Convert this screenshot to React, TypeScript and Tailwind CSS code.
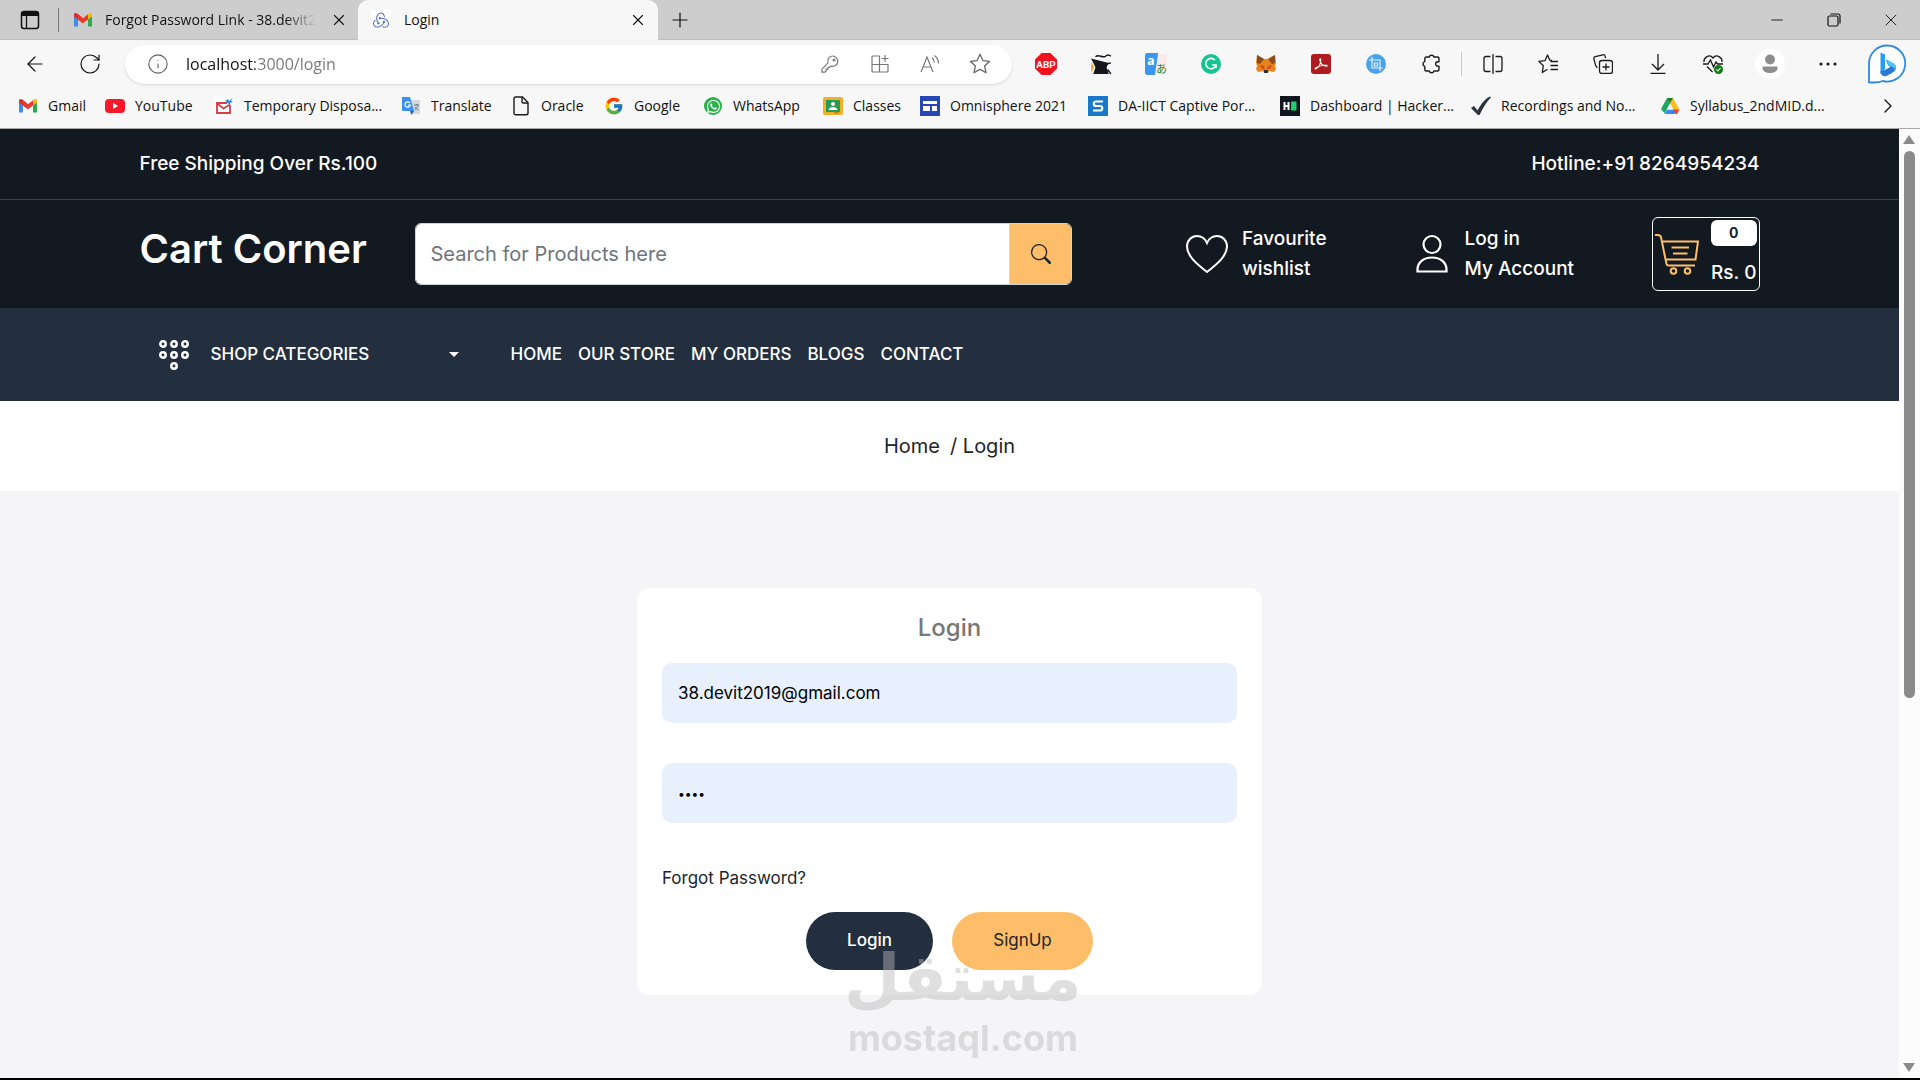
import React, { useState } from "react";
import { ArrowLeft, ChevronRight, Info, Minus, Plus, RotateCw, X } from "lucide-react";
import { BsSearch } from "react-icons/bs";
import { FaWhatsapp } from "react-icons/fa";
import { FcGoogle } from "react-icons/fc";
import { SiRedux } from "react-icons/si";

type IconProps = { className?: string };

const GmailIcon = ({ className = "h-5 w-5" }: IconProps) => (
  <svg viewBox="0 0 20 20" className={className}>
    <path d="M1 5v11.5h4V9z" fill="#3b8eea" />
    <path d="M19 5v11.5h-4V9z" fill="#2fa84f" />
    <path d="M1 4.5c0-1.500 2-2 3.200-1L10 8.200v5L1 6.500z" fill="#d93025" />
    <path d="M5 4.200l5 4 5-4v5.200l-5 3.800-5-3.800z" fill="#ea3a2e" />
    <path d="M15 4.200l.8-.6c1.200-1 3.200-.6 3.200.9v2l-4 2.900z" fill="#f5b912" />
  </svg>
);

const YoutubeIcon = () => (
  <svg viewBox="0 0 20 20" className="h-5 w-5">
    <rect x="0" y="3" width="20" height="14" rx="4" fill="#f6192a" />
    <path d="M8 7v6l5.200-3z" fill="#fff" />
  </svg>
);

const TempMailIcon = () => (
  <svg viewBox="0 0 20 20" className="h-5 w-5">
    <rect width="20" height="20" fill="#fff" />
    <path d="M13 7H3v10h13V9" fill="none" stroke="#dc3b42" strokeWidth="1.8" />
    <path d="M3 7.500l6.500 5 6.500-4" fill="none" stroke="#dc3b42" strokeWidth="1.800" />
    <path d="M11 5l3-2 1 2 4-3-2 3 2 1-3 1v3l-2-3-3 1 2-2z" fill="#2b8be0" />
  </svg>
);

const TranslateIcon = () => (
  <svg viewBox="0 0 20 20" className="h-5 w-5">
    <path d="M9 4h9c.6 0 1 .4 1 1v12c0 .6-.4 1-1 1h-6z" fill="#d5d8dc" />
    <path d="M2 1h7l4 14H2c-.6 0-1-.4-1-1V2c0-.6.400-1 1-1z" fill="#3c91ee" />
    <path d="M9 15h4l-2.500 4z" fill="#2059c4" />
    <path d="M9 7a2.700 2.700 0 1 0 .4 2H7" fill="none" stroke="#fff" strokeWidth="1.200" />
    <path d="M13 9h5M15.500 8v1M17 9c-.4 2.500-2 4-3.500 5M14 11c.8 1.500 2 2.500 3.500 3" fill="none" stroke="#6b7785" strokeWidth="1" />
  </svg>
);

const FileIcon = () => (
  <svg viewBox="0 0 20 20" className="h-5 w-5" fill="none" stroke="#1b1b1b" strokeWidth="1.400">
    <path d="M4.500 1h7L17 6.500V17c0 1-.7 1.800-1.800 1.800H4.800C3.700 18.800 3 18 3 17V2.600C3 1.600 3.700 1 4.500 1z" />
    <path d="M11 1v4.500c0 .8.500 1.500 1.300 1.500H17" />
  </svg>
);

const ClassroomIcon = () => (
  <svg viewBox="0 0 20 20" className="h-5 w-5">
    <rect y="1" width="20" height="18" rx="2" fill="#f0b02a" />
    <rect x="3" y="4" width="14" height="12" fill="#2a9b57" />
    <circle cx="10" cy="8" r="2" fill="#fff" />
    <path d="M5.500 14c.5-4 8.500-4 9 0z" fill="#fff" />
    <rect x="11" y="16" width="5" height="1.500" fill="#b98610" />
  </svg>
);

const SitesIcon = () => (
  <svg viewBox="0 0 20 20" className="h-5 w-5">
    <rect width="20" height="20" fill="#2747b5" />
    <rect x="3" y="5" width="14" height="3" fill="#fff" />
    <rect x="3" y="10" width="7" height="5" fill="#fff" />
    <rect x="12" y="10" width="5" height="5" fill="#fff" />
  </svg>
);

const CaptiveIcon = () => (
  <svg viewBox="0 0 20 20" className="h-5 w-5">
    <rect width="20" height="20" fill="#1a78c8" />
    <path d="M15 5.500H8c-3 0-3 4.500 0 4.500h4c3 0 3 4.500 0 4.500H5" fill="none" stroke="#fff" strokeWidth="2.200" />
  </svg>
);

const HackerRankIcon = () => (
  <svg viewBox="0 0 20 20" className="h-5 w-5">
    <rect width="20" height="20" fill="#0f161f" />
    <path d="M4.500 6v8M8.500 6v8M4.500 10h4" stroke="#fff" strokeWidth="2" />
    <rect x="11" y="5.500" width="5.500" height="9" rx="1" fill="#1fcf6c" />
  </svg>
);

const TickIcon = () => (
  <svg viewBox="0 0 20 20" className="h-5 w-5">
    <path d="M0 12l3-2 3.500 4.500C10 8 14 3 19 .5l1 .8C15 6.500 12 12 8.500 19H7z" fill="#2b323b" />
  </svg>
);

const DriveIcon = () => (
  <svg viewBox="0 0 20 20" className="h-5 w-5">
    <path d="M7 2h6l-3 5.500-5.500 9.700L1 13z" fill="#1fa463" />
    <path d="M13 2l6.500 11.500h-6L7 2z" fill="#fbbc1c" />
    <path d="M7 2h6l-3 5.300z" fill="#188038" />
    <path d="M4.500 18L7 13.500h9.500L15 18z" fill="#3b86f0" />
    <path d="M13.500 13.500h6L17 18h-1.500z" fill="#ea4335" />
    <path d="M10 8.300l-3 5.200h6z" fill="#f7f7f7" />
  </svg>
);

const KeyIcon = () => (
  <svg viewBox="0 0 20 20" className="h-5 w-5" fill="none" stroke="#75777a" strokeWidth="1.200">
    <path d="M12.500 2a5.200 5.200 0 1 1-1.700 10.100l-1.300 1.300H8v1.800H6.200V17L5 18.200H2v-3l6-6.300A5.200 5.200 0 0 1 12.500 2z" />
    <circle cx="14" cy="6" r="1" />
  </svg>
);

const AppsIcon = () => (
  <svg viewBox="0 0 20 20" className="h-5 w-5" fill="none" stroke="#75777a" strokeWidth="1.200">
    <path d="M9.500 2H3c-.6 0-1 .4-1 1v14c0 .6.400 1 1 1h14c.6 0 1-.4 1-1v-6.500H2M9.500 2v16M15 1v7M11.500 4.500h7" />
  </svg>
);

const ReadAloudIcon = () => (
  <svg viewBox="0 0 20 20" className="h-5 w-5" fill="none" stroke="#75777a" strokeWidth="1.200">
    <path d="M1 18L7 3l6 15M3.200 13h7.600M12 3.500c1.500 1.200 2.300 3 2.300 5M14.500 1.500c2.500 1.800 4 4.500 4 8" />
  </svg>
);

const StarIcon = () => (
  <svg viewBox="0 0 20 20" className="h-[22px] w-[22px]" fill="none" stroke="#65676a" strokeWidth="1.200" strokeLinejoin="round">
    <path d="M10 1.200l2.600 5.700 6.200.7-4.600 4.200 1.300 6.200-5.500-3.100-5.500 3.100 1.300-6.200L1.200 7.600l6.200-.7z" />
  </svg>
);

const AbpIcon = () => (
  <svg viewBox="0 0 20 20" className="h-[22px] w-[22px]">
    <path d="M6 0h8l6 6v8l-6 6H6l-6-6V6z" fill="#f2131f" />
    <text x="10" y="13.300" textAnchor="middle" fontSize="9" fontWeight="700" fontFamily="Roboto, sans-serif" fill="#fff">
      ABP
    </text>
  </svg>
);

const ClapperIcon = () => (
  <svg viewBox="0 0 20 20" className="h-[22px] w-[22px]">
    <path d="M1 8l3 5-3 5z" fill="#f4b136" />
    <path d="M1 5l16 4-2 4 2 6H3l2-6z" fill="#15171a" />
    <path d="M5 3.500c3-3 6 1.500 9-.5 2-2 4-1 5 0M15 10l4-1M16 15l3 4" fill="none" stroke="#15171a" strokeWidth="1.300" />
  </svg>
);

const DictionaryIcon = () => (
  <svg viewBox="0 0 20 20" className="h-[22px] w-[22px]">
    <rect x="8" y="1" width="12" height="18" fill="#fbeae8" />
    <path d="M2 0h10L9 20H2c-1 0-2-.8-2-2V2C0 .8 1 0 2 0z" fill="#3a97ee" />
    <text x="2" y="11" fontSize="11" fontWeight="700" fontFamily="Open Sans, sans-serif" fill="#fff">
      a
    </text>
    <text x="10" y="18" fontSize="10" fontFamily="Noto Sans CJK JP, sans-serif" fill="#1f8a3b">
      あ
    </text>
  </svg>
);

const GrammarIcon = () => (
  <svg viewBox="0 0 20 20" className="h-5 w-5">
    <circle cx="10" cy="10" r="10" fill="#15c491" />
    <path d="M14 6.200A5.200 5.200 0 1 0 15 11h-4M15 11v3" fill="none" stroke="#fff" strokeWidth="1.600" />
  </svg>
);

const FoxIcon = () => (
  <svg viewBox="0 0 20 20" className="h-5 w-5">
    <path d="M1 1l7 4h4l7-4 1 7-1 4 1 3-2 3-5-1-1 2H8l-1-2-5 1-2-3 1-3-1-4z" fill="#e8831d" />
    <path d="M1 1l7 4-4 5-3-1zM19 1l-7 4 4 5 3-1z" fill="#8a4b1d" />
    <path d="M4 11l4 1 1 3H6zM16 11l-4 1-1 3h3z" fill="#c94f25" />
    <path d="M8 16h4v3H8z" fill="#2a2f38" />
  </svg>
);

const AcrobatIcon = () => (
  <svg viewBox="0 0 20 20" className="h-5 w-5">
    <rect width="20" height="20" rx="3" fill="#b11a1e" />
    <path d="M4.500 15c3-1 5-4.500 5.300-9.500 0-1.300-1.300-.8-1 .4.7 3.700 3.200 6.300 6.700 6.300 1.200-.2.500-1.400-1.200-1.200-3.300.2-6.500 1-9.300 2.800-1 .7-1.200 1.500-.5 1.200z" fill="none" stroke="#fff" strokeWidth="1.100" />
  </svg>
);

const CropIcon = () => (
  <svg viewBox="0 0 20 20" className="h-5 w-5">
    <circle cx="10" cy="10" r="10" fill="#4aa3ea" />
    <path d="M6 3v11h11M3 6h11v11M8.500 9h3v3h-3z" fill="none" stroke="#e6f3fd" strokeWidth="1.200" />
  </svg>
);

// top, left and bottom knobs, with a notch on the right side
const PuzzleIcon = () => (
  <svg viewBox="0 0 20 20" className="h-5 w-5" fill="none" stroke="#1b1b1b" strokeWidth="1.400" strokeLinejoin="round">
    <path d="M8.200 3a2.500 2.500 0 0 1 4.800 0h3.500c.8 0 1.500.7 1.500 1.500v3.300h-1.200a2.200 2.200 0 0 0 0 4.400H18v3.300c0 .8-.7 1.500-1.500 1.500H13a2.500 2.500 0 0 1-4.800 0H5.300c-.8 0-1.500-.7-1.500-1.500v-3.100a2.500 2.500 0 0 1 0-4.800V4.500c0-.8.700-1.500 1.500-1.500z" />
  </svg>
);

const SplitIcon = () => (
  <svg viewBox="0 0 20 20" className="h-5 w-5" fill="none" stroke="#1b1b1b" strokeWidth="1.300">
    <path d="M7.500 2.500H3c-1.200 0-2 .8-2 2v11c0 1.200.8 2 2 2h4.500M12.500 2.500H17c1.200 0 2 .8 2 2v11c0 1.200-.8 2-2 2h-4.500M10 0v20" />
  </svg>
);

const FavoritesIcon = () => (
  <svg viewBox="0 0 20 20" className="h-5 w-5" fill="none" stroke="#1b1b1b" strokeWidth="1.300" strokeLinejoin="round">
    <path d="M14 6.500l-2.200-.3L9.500 1 7 6.700.8 7.400l4.500 4.300-1 6.800 5.200-3.200M12.500 7.500H20M12.500 11.500H20M12.500 15.500H20" />
  </svg>
);

const CollectionsIcon = () => (
  <svg viewBox="0 0 20 20" className="h-5 w-5" fill="none" stroke="#1b1b1b" strokeWidth="1.300">
    <path d="M4.500 13.500c-1-.2-1.600-.8-1.800-1.800L.9 5c-.3-1.200.3-2 1.400-2.300L9.800.8c1.200-.3 2 .3 2.300 1.400l.5 2" />
    <rect x="6.500" y="6.500" width="13" height="13" rx="2.500" />
    <path d="M13 9.500v7M9.500 13h7" />
  </svg>
);

const DownloadIcon = () => (
  <svg viewBox="0 0 20 20" className="h-5 w-5" fill="none" stroke="#1b1b1b" strokeWidth="1.300">
    <path d="M10 0v15.500M4 10l6 6 6-6M2.500 19.300h15" />
  </svg>
);

const HealthIcon = () => (
  <svg viewBox="0 0 20 20" className="h-5 w-5" fill="none" stroke="#1b1b1b" strokeWidth="1.300">
    <path d="M1 8C.5 3.500 6.500-.5 10 4c3.500-4.500 9.500-.5 9 4M0 10h5l2.500-4 3 7 2.500-5 1.500 2H20M4 12.500l5.500 5.500" />
    <circle cx="15.500" cy="15.500" r="4.500" fill="#107c10" stroke="none" />
    <path d="M13.500 15.500l1.500 1.500 2.500-3" stroke="#fff" strokeWidth="1.100" />
  </svg>
);

const ProfileIcon = () => (
  <svg viewBox="0 0 30 30" className="h-[30px] w-[30px]">
    <circle cx="15" cy="15" r="15" fill="#fff" />
    <circle cx="15" cy="10.500" r="5" fill="#8e8e8e" />
    <path d="M7.500 17.500h15v1.500c0 3-3.500 5-7.500 5s-7.500-2-7.500-5z" fill="#8e8e8e" />
  </svg>
);

const DotsIcon = () => (
  <svg viewBox="0 0 20 20" className="h-5 w-5" fill="#1b1b1b">
    <circle cx="3" cy="10" r="1.600" />
    <circle cx="10" cy="10" r="1.600" />
    <circle cx="17" cy="10" r="1.600" />
  </svg>
);

const BingIcon = () => (
  <svg viewBox="0 0 40 40" className="h-10 w-10">
    <path d="M20 1.500a18 18 0 1 1-4 35.500c-4 1.500-8 1.800-14 1.300V19.500a18 18 0 0 1 18-18z" fill="#fff" stroke="#2f8ade" strokeWidth="1.800" />
    <path d="M13.500 8.500l4.500 2v14.500l-4.500 5z" fill="#2b9df0" />
    <path d="M13.500 27v1.500c.5 3.500 4.500 4.500 7 3l6-3.500c3-2 3.300-6 .5-8.200l-8-4 2 5.500 2.500 1.500-5.500 3.200z" fill="#2a79d8" />
    <path d="M19.500 15.300l2 5.500 3.500 1.800c2 1.200 3 2.500 3.300 3.400 1-3-.2-5.700-2.300-6.900z" fill="#4cc8f2" />
  </svg>
);

const HeartIcon = () => (
  <svg viewBox="0 0 44 40" className="h-10 w-11 shrink-0" fill="none" stroke="#fff" strokeWidth="2">
    <path d="M22 38C12 30 2 22 2 12.500 2 6.500 6.500 2 12 2c4.500 0 8 2.500 10 7 2-4.500 5.500-7 10-7 5.500 0 10 4.500 10 10.500C42 22 32 30 22 38z" />
  </svg>
);

const UserIcon = () => (
  <svg viewBox="0 0 34 40" className="h-10 w-[34px] shrink-0" fill="none" stroke="#fff" strokeWidth="2.200">
    <circle cx="17" cy="10.500" r="8.500" />
    <path d="M2.500 37.500v-2c0-7 6-12 14.500-12s14.500 5 14.500 12v2z" />
  </svg>
);

const CartIcon = () => (
  <svg viewBox="0 0 44 42" className="h-[42px] w-11" fill="none" stroke="#febd69" strokeWidth="2">
    <path d="M0 2h3c1.500 0 2.500.8 3 2.200L11.500 31c.3 1 1 1.500 2 1.500H40M7.500 8.500H43l-2.500 18H10.500M16.500 14.500H34M18 20.500h14.500" />
    <circle cx="18.500" cy="38" r="2.800" />
    <circle cx="32.500" cy="38" r="2.800" />
  </svg>
);

const MenuDotsIcon = () => (
  <svg viewBox="0 0 30 30" className="h-[30px] w-[30px]" fill="none" stroke="#fff" strokeWidth="2.500">
    <circle cx="4" cy="4" r="2.700" />
    <circle cx="15" cy="4" r="2.700" />
    <circle cx="26" cy="4" r="2.700" />
    <circle cx="4" cy="15" r="2.700" />
    <circle cx="15" cy="15" r="2.700" />
    <circle cx="26" cy="15" r="2.700" />
    <circle cx="15" cy="26" r="2.700" />
  </svg>
);

const bookmarks = [
  { label: "Gmail", icon: <GmailIcon />, width: "w-[87px]" },
  { label: "YouTube", icon: <YoutubeIcon />, width: "w-[109px]" },
  { label: "Temporary Disposa...", icon: <TempMailIcon />, width: "w-[187px]" },
  { label: "Translate", icon: <TranslateIcon />, width: "w-[110px]" },
  { label: "Oracle", icon: <FileIcon />, width: "w-[93px]" },
  { label: "Google", icon: <FcGoogle size={20} />, width: "w-[99px]" },
  {
    label: "WhatsApp",
    icon: (
      <span className="flex h-5 w-5 items-center justify-center">
        <span className="flex h-[18px] w-[18px] items-center justify-center rounded-full bg-[#2bb14c] text-white">
          <FaWhatsapp size={15} />
        </span>
      </span>
    ),
    width: "w-[120px]",
  },
  { label: "Classes", icon: <ClassroomIcon />, width: "w-[97px]" },
  { label: "Omnisphere 2021", icon: <SitesIcon />, width: "w-[168px]" },
  { label: "DA-IICT Captive Por...", icon: <CaptiveIcon />, width: "w-[192px]" },
  { label: "Dashboard | Hacker...", icon: <HackerRankIcon />, width: "w-[191px]" },
  { label: "Recordings and No...", icon: <TickIcon />, width: "w-[189px]" },
  { label: "Syllabus_2ndMID.d...", icon: <DriveIcon />, width: "w-[189px]" },
];

const extensions = [
  { label: "Adblock Plus", icon: <AbpIcon /> },
  { label: "Clapper", icon: <ClapperIcon /> },
  { label: "Dictionary", icon: <DictionaryIcon /> },
  { label: "Grammar", icon: <GrammarIcon /> },
  { label: "Wallet", icon: <FoxIcon /> },
  { label: "Acrobat", icon: <AcrobatIcon /> },
  { label: "Capture", icon: <CropIcon /> },
  { label: "Extensions", icon: <PuzzleIcon /> },
];

const browserTools = [
  { label: "Split screen", icon: <SplitIcon /> },
  { label: "Favorites", icon: <FavoritesIcon /> },
  { label: "Collections", icon: <CollectionsIcon /> },
  { label: "Downloads", icon: <DownloadIcon /> },
  { label: "Browser essentials", icon: <HealthIcon /> },
];

const addressTools = [
  { label: "Passwords", icon: <KeyIcon /> },
  { label: "Apps", icon: <AppsIcon /> },
  { label: "Read aloud", icon: <ReadAloudIcon /> },
  { label: "Add to favorites", icon: <StarIcon /> },
];

const navLinks = ["Home", "Our Store", "My Orders", "Blogs", "Contact"];

function TabStrip() {
  return (
    <div className="flex h-10 items-stretch border-b border-[#bdbdbd] bg-[#cdcdcd]">
      <div className="flex w-[358px] items-center pl-5">
        <button aria-label="Tab actions">
          <svg viewBox="0 0 20 20" className="h-5 w-5">
            <rect x="1.500" y="1.500" width="17" height="17" rx="2.500" fill="none" stroke="#111" strokeWidth="1.500" />
            <path d="M1.500 6V4c0-1.500 1-2.500 2.500-2.500h12c1.500 0 2.500 1 2.500 2.500v2z" fill="#111" />
            <path d="M6.500 6v12" stroke="#111" strokeWidth="1.300" />
          </svg>
        </button>
        <div className="ml-[18px] h-6 w-px bg-[#777]" />
        <GmailIcon className="ml-[14px] h-5 w-5 shrink-0" />
        <span className="ml-3 bg-[linear-gradient(to_right,#111_85%,#cdcdcd)] bg-clip-text whitespace-nowrap text-transparent">
          Forgot Password Link - 38.devit2
        </span>
        <button aria-label="Close tab" className="mr-[10px] ml-auto">
          <X size={18} strokeWidth={1.500} />
        </button>
      </div>
      <div className="-mb-px flex w-[300px] items-center rounded-t-[10px] bg-[#f7f7f7] px-[13px] pb-px">
        <span className="flex h-5 w-5 items-center justify-center bg-white text-[#4f6ab5]">
          <SiRedux size={16} />
        </span>
        <span className="ml-[13px]">Login</span>
        <button aria-label="Close tab" className="-mr-[2px] ml-auto">
          <X size={18} strokeWidth={1.500} />
        </button>
      </div>
      <button aria-label="New tab" className="ml-[10px]">
        <Plus size={24} strokeWidth={1.200} />
      </button>
      <div className="ml-auto flex">
        <button aria-label="Minimize" className="flex w-[57px] items-center justify-center">
          <Minus size={18} strokeWidth={1.200} />
        </button>
        <button aria-label="Restore" className="flex w-[57px] items-center justify-center">
          <svg viewBox="0 0 14 14" className="h-[14px] w-[14px]" fill="none" stroke="#111" strokeWidth="1.200">
            <rect x="1" y="3" width="10" height="10" rx="1.500" />
            <path d="M3.500 1H11c1.200 0 2 .8 2 2v7.500" />
          </svg>
        </button>
        <button aria-label="Close window" className="flex w-[58px] items-center justify-center">
          <X size={20} strokeWidth={1.100} />
        </button>
      </div>
    </div>
  );
}

function Toolbar() {
  return (
    <div className="flex h-12 items-center pr-[13px] pl-[23px]">
      <button aria-label="Back">
        <ArrowLeft size={24} strokeWidth={1.200} />
      </button>
      <button aria-label="Reload" className="ml-[31px]">
        <RotateCw size={24} strokeWidth={1.200} />
      </button>
      <div className="mr-[6px] ml-[23px] flex h-[39px] flex-1 items-center rounded-full bg-white pr-[7px] pl-[22px] shadow-sm">
        <Info size={22} strokeWidth={1.200} className="text-[#5f6164]" />
        <input
          aria-label="Address"
          defaultValue="localhost:3000/login"
          className="ml-[17px] flex-1 bg-[linear-gradient(to_right,#111_69px,#767676_69px)] bg-clip-text text-base text-transparent outline-none"
        />
        {addressTools.map((tool) => (
          <button key={tool.label} aria-label={tool.label} className="flex w-[50px] justify-center">
            {tool.icon}
          </button>
        ))}
      </div>
      {extensions.map((ext) => (
        <button key={ext.label} aria-label={ext.label} className="flex w-[55px] justify-center">
          {ext.icon}
        </button>
      ))}
      <div className="mx-[3px] h-6 w-px bg-[#c8c8c8]" />
      {browserTools.map((tool) => (
        <button key={tool.label} aria-label={tool.label} className="flex w-[55px] justify-center">
          {tool.icon}
        </button>
      ))}
      <button aria-label="Profile" className="flex w-[60px] justify-center">
        <ProfileIcon />
      </button>
      <button aria-label="Settings" className="flex w-[55px] justify-center">
        <DotsIcon />
      </button>
      <button aria-label="Bing" className="ml-3">
        <BingIcon />
      </button>
    </div>
  );
}

function BookmarksBar() {
  return (
    <div className="flex h-[41px] items-center border-b border-[#a9a9a9] pb-1 pl-[18px] whitespace-nowrap">
      {bookmarks.map((item) => (
        <a key={item.label} href="#" className={`flex shrink-0 items-center gap-[10px] ${item.width}`}>
          {item.icon}
          <span>{item.label}</span>
        </a>
      ))}
      <button aria-label="More bookmarks" className="mr-5 ml-auto">
        <ChevronRight size={24} strokeWidth={1.300} />
      </button>
    </div>
  );
}

function StoreHeader() {
  return (
    <header className="text-white">
      <div className="border-b border-[#3b4149] bg-[#131921]">
        <div className="mx-auto flex h-[70px] max-w-[1650px] items-center justify-between px-[15px] text-[19px] font-medium">
          <p>Free Shipping Over Rs.100</p>
          <p>
            Hotline:<a href="tel:+918264954234">+91 8264954234</a>
          </p>
        </div>
      </div>

      <div className="bg-[#131921]">
        <div className="mx-auto grid max-w-[1650px] grid-cols-12 items-center gap-x-[30px] px-[15px] py-[17px]">
          <h2 className="col-span-2 mb-[10px] text-[40px] leading-[48px] font-semibold whitespace-nowrap">
            <a href="#">Cart Corner</a>
          </h2>
          <form className="col-span-5 flex h-[62px] overflow-hidden rounded-md border border-[#ced4da]" onSubmit={(e) => e.preventDefault()}>
            <input
              aria-label="Search for Products here"
              placeholder="Search for Products here"
              className="flex-1 bg-white px-[15px] text-xl text-black outline-none placeholder:text-[#6c757d]"
            />
            <button aria-label="Search" className="flex w-[62px] items-center justify-center border-l border-[#ced4da] bg-[#febd69] text-[#212529]">
              <BsSearch size={20} />
            </button>
          </form>
          <div className="col-span-5 flex items-center pl-[83px] text-[19px] leading-[30px] font-medium">
            <a href="#" className="flex items-center gap-[13px]">
              <HeartIcon />
              <span>
                Favourite <br /> wishlist
              </span>
            </a>
            <a href="#" className="mr-auto ml-[88px] flex items-center gap-4">
              <UserIcon />
              <span>
                Log in <br /> My Account
              </span>
            </a>
            <a href="#" className="flex h-[74px] items-center gap-3 rounded-md border border-white px-[2px]">
              <CartIcon />
              <span className="flex flex-col gap-3">
                <span className="rounded-md bg-white text-center text-sm leading-[26px] font-bold text-[#212529]">0</span>
                <span>Rs. 0</span>
              </span>
            </a>
          </div>
        </div>
      </div>

      <div className="bg-[#232f3e]">
        <div className="mx-auto flex h-[93px] max-w-[1650px] items-center px-[15px] text-[17px] font-medium uppercase">
          <button className="ml-[19px] flex w-[300px] items-center uppercase">
            <MenuDotsIcon />
            <span className="ml-[22px]">Shop Categories</span>
            <span className="ml-auto border-x-[5px] border-t-[5px] border-x-transparent border-t-white" />
          </button>
          <nav className="ml-[52px] flex gap-4">
            {navLinks.map((link) => (
              <a key={link} href="#">
                {link}
              </a>
            ))}
          </nav>
        </div>
      </div>
    </header>
  );
}

function LoginForm() {
  const [email, setEmail] = useState("38.devit2019@gmail.com");
  const [password, setPassword] = useState("1234");

  return (
    <form className="mx-auto w-full max-w-[625px] rounded-[13px] bg-white p-[25px] text-[17px]" onSubmit={(e) => e.preventDefault()}>
      <h3 className="mb-5 text-center text-2xl leading-[30px] font-medium text-[#777]">Login</h3>
      <input
        type="email"
        aria-label="Email"
        value={email}
        onChange={(e) => setEmail(e.target.value)}
        className="block h-[60px] w-full rounded-[10px] bg-[#e8f0fe] px-4 text-[17px] text-black outline-none"
      />
      <input
        type="password"
        aria-label="Password"
        value={password}
        onChange={(e) => setPassword(e.target.value)}
        className="mt-10 block h-[60px] w-full rounded-[10px] bg-[#e8f0fe] px-4 text-xs text-black outline-none"
      />
      <a href="#" className="mt-[41px] block leading-7">
        Forgot Password?
      </a>
      <div className="mt-5 flex justify-center gap-[19px]">
        <button className="h-[58px] w-[127px] rounded-full bg-[#232f3e] font-medium text-white">Login</button>
        <button type="button" className="h-[58px] w-[141px] rounded-full bg-[#febd69]">
          SignUp
        </button>
      </div>
    </form>
  );
}

function Scrollbar() {
  return (
    <div className="flex w-[21px] flex-col items-center justify-between bg-[#fcfcfc] py-[6px] pr-px">
      <span className="border-x-[6px] border-b-[9px] border-x-transparent border-b-[#8b8b8b]" />
      <div className="mt-[7px] w-[11px] flex-[60] rounded-full bg-[#8b8b8b]" />
      <div className="flex-[40]" />
      <span className="border-x-[6px] border-t-[9px] border-x-transparent border-t-[#8b8b8b]" />
    </div>
  );
}

export default function App() {
  return (
    <div className="flex min-h-screen flex-col border-b-2 border-black bg-[#f5f5f7] font-['Inter',sans-serif] text-[#212529]">
      <div className="bg-[#f7f7f7] font-['Open_Sans',sans-serif] text-sm text-[#111]">
        <TabStrip />
        <Toolbar />
        <BookmarksBar />
      </div>

      <div className="flex flex-1">
        <div className="flex min-w-0 flex-1 flex-col">
          <StoreHeader />
          <div className="bg-white py-[30px] text-center text-xl leading-[30px]">
            <a href="#">Home</a>
            <span className="ml-[10px]">/ Login</span>
          </div>
          <main className="relative flex-1 px-4 pt-[97px] pb-20">
            <LoginForm />
            {/* watermark */}
            <div className="pointer-events-none absolute bottom-4 left-[844px] flex flex-col items-center font-bold text-[#bababa] opacity-45">
              <span dir="rtl" lang="ar" className="font-['DejaVu_Sans',sans-serif] text-[65px] leading-[72px]">
                مستقل
              </span>
              <span className="text-4xl leading-[48px]">mostaql.com</span>
            </div>
          </main>
        </div>
        <Scrollbar />
      </div>
    </div>
  );
}
